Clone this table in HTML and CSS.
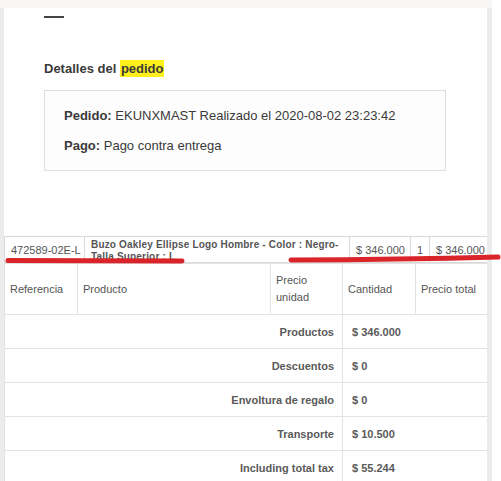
FILE: index.html
```html
<!DOCTYPE html>
<html lang="es">
<head>
<meta charset="utf-8">
<title>Detalles del pedido</title>
<link rel="stylesheet" href="styles.css">
</head>
<body>
<div class="topband"></div>
<div class="frame">
  <div class="leftstrip"></div>
  <main class="main">
    <div class="intro">
      <div class="dash"></div>
      <h3 class="heading">Detalles del <mark class="hl">pedido</mark></h3>
      <div class="infobox">
        <p class="info"><strong>Pedido:</strong> EKUNXMAST Realizado el 2020-08-02 23:23:42</p>
        <p class="info"><strong>Pago:</strong> Pago contra entrega</p>
      </div>
    </div>
    <table class="prodrow">
      <tr>
        <td class="c-ref">472589-02E-L</td>
        <td class="c-name"><div class="clip">Buzo Oakley Ellipse Logo Hombre - Color : Negro-Talla Superior : L</div></td>
        <td class="c-price">$ 346.000</td>
        <td class="c-qty">1</td>
        <td class="c-total">$ 346.000</td>
      </tr>
    </table>
    <table class="summary">
      <tr class="head">
        <td class="h-ref">Referencia</td>
        <td class="h-prod">Producto</td>
        <td class="h-unit">Precio unidad</td>
        <td class="h-qty">Cantidad</td>
        <td class="h-tot">Precio total</td>
      </tr>
      <tr class="tot"><td colspan="3" class="lbl">Productos</td><td colspan="2" class="val">$ 346.000</td></tr>
      <tr class="tot"><td colspan="3" class="lbl">Descuentos</td><td colspan="2" class="val">$ 0</td></tr>
      <tr class="tot"><td colspan="3" class="lbl">Envoltura de regalo</td><td colspan="2" class="val">$ 0</td></tr>
      <tr class="tot"><td colspan="3" class="lbl">Transporte</td><td colspan="2" class="val">$ 10.500</td></tr>
      <tr class="tot"><td colspan="3" class="lbl">Including total tax</td><td colspan="2" class="val">$ 55.244</td></tr>
    </table>
  </main>
  <div class="rightstrip"></div>
</div>
<svg class="marks" width="501" height="481" viewBox="0 0 501 481">
  <path d="M8 260.5 L182 261" stroke="#d9252a" stroke-width="5" stroke-linecap="round" fill="none"/>
  <path d="M291 260 Q400 259.5 498 257" stroke="#d9252a" stroke-width="5" stroke-linecap="round" fill="none"/>
</svg>
</body>
</html>
```

FILE: styles.css
```css
* { box-sizing: border-box; }
html, body { margin: 0; padding: 0; }
body {
  width: 501px;
  height: 481px;
  overflow: hidden;
  background: #fff;
  font-family: "Liberation Sans", Arial, sans-serif;
  color: #333;
  position: relative;
}
.topband {
  width: 492px;
  height: 8px;
  background: #f7f6f5;
}
.frame {
  display: flex;
  height: 473px;
}
.leftstrip {
  width: 4px;
  background: #ececec;
}
.rightstrip {
  width: 5px;
  background: #ececec;
}
.main {
  width: 483px;
  background: #fff;
}
.intro {
  padding: 8px 0 0 40px;
  height: 228px;
}
.dash {
  width: 20px;
  height: 2px;
  background: #444;
}
.heading {
  margin: 42px 0 0 0;
  font-size: 13px;
  font-weight: bold;
  color: #3a3a3a;
  line-height: 17px;
  height: 17px;
}
.hl {
  background: #ffef1a;
  color: #3a3a3a;
  padding: 1px 1px;
}
.infobox {
  margin-top: 13px;
  width: 402px;
  height: 81px;
  border: 1px solid #dedede;
  background: #fdfdfd;
  padding: 10px 0 0 19px;
}
.info {
  margin: 0;
  font-size: 13px;
  line-height: 30px;
  color: #3a3a3a;
}

.prodrow, .summary {
  width: 483px;
  border-collapse: collapse;
  table-layout: fixed;
  font-size: 11px;
  color: #555;
}
.prodrow td {
  border: 1px solid #d9d9d9;
  height: 26px;
  padding: 0 6px;
  vertical-align: middle;
  white-space: nowrap;
}
.c-ref { width: 80px; }
.c-name { width: 265px; }
.c-price { width: 61px; text-align: right; }
.prodrow .c-qty { width: 19px; text-align: center; padding: 0; }
.c-total { width: 58px; text-align: right; }
.prodrow .c-name { white-space: normal; padding: 0 2px 0 6px; }
.clip {
  height: 24px;
  overflow: hidden;
  font-weight: bold;
  font-size: 10px;
  letter-spacing: 0.18px;
  line-height: 12px;
  padding-top: 1px;
}

.summary td {
  border: 1px solid #e3e3e3;
  padding: 0 5px;
  vertical-align: middle;
}
.summary tr.head td { height: 51px; line-height: 17px; }
.h-ref { width: 73px; }
.h-prod { width: 193px; }
.h-unit { width: 72px; }
.h-qty { width: 73px; }
.h-tot { width: 72px; }
.summary tr.tot td {
  height: 34px;
  font-weight: bold;
  color: #5a5a5a;
}
.summary .lbl { text-align: right; padding-right: 8px; }
.summary .val { padding-left: 9px; }

.marks {
  position: absolute;
  top: 0;
  left: 0;
  pointer-events: none;
}
```
